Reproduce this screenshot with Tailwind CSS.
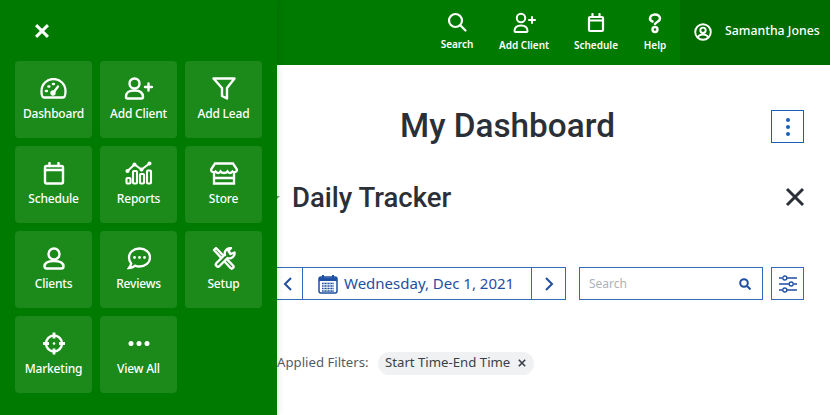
<!DOCTYPE html>
<html lang="en">
<head>
  <meta charset="UTF-8">
  <meta name="viewport" content="width=device-width, initial-scale=1.0">
  <title>My Dashboard</title>
  <script src="https://cdn.jsdelivr.net/npm/@tailwindcss/browser@4"></script>
</head>
<body class="bg-white font-['Noto_Sans',sans-serif] overflow-hidden">
<div class="relative w-[830px] h-[415px] overflow-hidden">

  <!-- Header -->
  <header class="h-[65px] bg-[#007a00] flex justify-end text-white">
    <nav class="flex">
      <a class="w-[58px] flex flex-col items-center pt-[11px]">
        <svg class="w-[22px] h-[22px]" viewBox="0 0 22 22" fill="none" stroke="currentColor" stroke-width="2.200" stroke-linecap="round"><circle cx="9.500" cy="9.500" r="6.500"/><path d="M14.500 14.500l5 5"/></svg>
        <span class="mt-[4px] text-[10px] leading-[14px] font-semibold">Search</span>
      </a>
      <a class="w-[76px] flex flex-col items-center pt-[12px]">
        <svg class="w-[24px] h-[22px]" viewBox="0 0 24 22" fill="none" stroke="currentColor" stroke-width="2" stroke-linecap="round"><circle cx="9" cy="6" r="4.200"/><path d="M2.500 19c0-4 2-5.500 6.500-5.500s6.500 1.500 6.500 5.500c0 .6-.4 1-1 1h-11c-.6 0-1-.4-1-1zM17 8h6M20 5v6"/></svg>
        <span class="mt-[4px] text-[10px] leading-[14px] font-semibold">Add Client</span>
      </a>
      <a class="w-[68px] flex flex-col items-center pt-[13px]">
        <svg class="w-[18px] h-[20px]" viewBox="0 0 18 20" fill="none" stroke="currentColor" stroke-width="2.200" stroke-linecap="round"><rect x="2" y="4" width="14" height="14" rx="1"/><path d="M2 7.500h14M5.500 1v3M12.500 1v3"/></svg>
        <span class="mt-[5px] text-[10px] leading-[14px] font-semibold">Schedule</span>
      </a>
      <a class="w-[50px] flex flex-col items-center pt-[13px]">
        <svg class="w-[16px] h-[21px]" viewBox="0 0 16 21" fill="none" stroke="currentColor" stroke-width="2.400" stroke-linecap="round"><path d="M3 6c0-2.800 2-4.500 5-4.500s5 1.700 5 4.300c0 2.800-4 2.700-5 5.200"/><path d="M3 5.500c0 1.500 1 2.500 2.500 3"/><circle cx="8" cy="16.500" r="2.500"/></svg>
        <span class="mt-[4px] text-[10px] leading-[14px] font-semibold">Help</span>
      </a>
    </nav>
    <div class="w-[150px] bg-[#006c00] flex items-center pl-[14px] gap-[13px] pb-[2px]">
      <svg class="w-[18px] h-[18px] shrink-0" viewBox="0 0 18 18" fill="none" stroke="currentColor" stroke-width="1.900"><circle cx="9" cy="9" r="7.800"/><circle cx="9" cy="7.300" r="2.700"/><path d="M4 14.500c.6-2.200 2.500-3 5-3s4.400.8 5 3"/></svg>
      <span class="text-[12.300px] font-medium whitespace-nowrap">Samantha Jones</span>
    </div>
  </header>

  <!-- Main content -->
  <main class="pl-[277px] text-[#2b2f38]">
    <section class="h-[107px] relative flex justify-center pt-[39px] pr-[92px]">
      <h1 class="font-['Roboto',sans-serif] font-medium text-[33.300px] leading-[44px]">My Dashboard</h1>
      <button class="absolute right-[26px] top-[45px] w-[33px] h-[33px] border border-[#1a5fb4] flex flex-col items-center justify-center gap-[3px]">
        <i class="block w-[4px] h-[4px] rounded-full bg-[#1a5fb4]"></i>
        <i class="block w-[4px] h-[4px] rounded-full bg-[#1a5fb4]"></i>
        <i class="block w-[4px] h-[4px] rounded-full bg-[#1a5fb4]"></i>
      </button>
    </section>

    <section class="relative flex items-center justify-between h-[50px] pl-[15px] pr-[25px]">
      <span class="absolute left-0 top-[24px] w-0 h-0 border-t-[3px] border-t-[#8a8d92] border-r-[3px] border-r-transparent"></span>
      <h2 class="font-['Roboto',sans-serif] font-medium text-[27.500px] leading-[50px] pt-[1px]">Daily Tracker</h2>
      <svg class="w-[20px] h-[20px]" viewBox="0 0 20 20" fill="none" stroke="#2b2f38" stroke-width="3"><path d="M2 2l16 16M18 2L2 18"/></svg>
    </section>

    <section class="flex items-stretch h-[33px] mt-[45px] text-[#1f4fa3]">
      <div class="flex border border-[#2f6bb8] border-l-0">
        <button class="w-[26px] flex items-center justify-center border-r border-[#2f6bb8] pr-[3px]">
          <svg class="w-[10px] h-[14px]" viewBox="0 0 10 14" fill="none" stroke="currentColor" stroke-width="2"><path d="M8 1L2 7l6 6"/></svg>
        </button>
        <div class="w-[229px] flex items-center pl-[15px] gap-[6px] border-r border-[#2f6bb8]">
          <svg class="w-[20px] h-[20px]" viewBox="0 0 20 20"><rect x="1" y="3" width="18" height="16" rx="2" fill="none" stroke="#1f4fa3" stroke-width="1.500"/><path d="M1 3.500h18V7H1z" fill="#1f4fa3"/><path d="M5 1v4M15 1v4" stroke="#1f4fa3" stroke-width="2"/><path d="M4 9.500h12M4 12h12M4 14.500h12M4 17h12" stroke="#1f4fa3" stroke-width="1.300"/><path d="M6 9v8.500M9 9v8.500M12 9v8.500M15 9v8.500" stroke="#fff" stroke-width=".8"/></svg>
          <span class="text-[15px] leading-none whitespace-nowrap">Wednesday, Dec 1, 2021</span>
        </div>
        <button class="w-[33px] flex items-center justify-center">
          <svg class="w-[10px] h-[14px]" viewBox="0 0 10 14" fill="none" stroke="currentColor" stroke-width="2"><path d="M2 1l6 6-6 6"/></svg>
        </button>
      </div>
      <div class="ml-[13px] w-[184px] border border-[#2f6bb8] flex items-center justify-between pl-[9px] pr-[11px]">
        <span class="text-[12px] text-[#aab2bd]">Search</span>
        <svg class="w-[12px] h-[12px]" viewBox="0 0 12 12" fill="none" stroke="#1f4fa3" stroke-width="2"><circle cx="5" cy="5" r="3.800"/><path d="M8 8l3.500 3.500"/></svg>
      </div>
      <button class="ml-[8px] w-[33px] border border-[#2f6bb8] flex items-center justify-center">
        <svg class="w-[20px] h-[20px]" viewBox="0 0 20 20" fill="none" stroke="#1f4fa3" stroke-width="1.300"><path d="M1 4h3.500M9 4h10M1 10h10M15.500 10H19M1 16h3.500M9 16h10"/><circle cx="6.800" cy="4" r="2"/><circle cx="13.200" cy="10" r="2"/><circle cx="6.800" cy="16" r="2"/></svg>
      </button>
    </section>

    <section class="flex items-center mt-[51px] h-[24px]">
      <span class="text-[13.200px] text-[#555b64] w-[101px] whitespace-nowrap">Applied Filters:</span>
      <div class="h-[23px] w-[156px] rounded-full bg-[#f0f1f3] flex items-center pl-[7px] gap-[8px] text-[#3a3f47]">
        <span class="text-[13.200px] whitespace-nowrap">Start Time-End Time</span>
        <svg class="w-[8px] h-[8px]" viewBox="0 0 8 8" fill="none" stroke="currentColor" stroke-width="1.600"><path d="M.8.800l6.400 6.400M7.200.800L.8 7.200"/></svg>
      </div>
    </section>
  </main>

  <!-- Sidebar menu, lies over the page -->
  <aside class="absolute left-0 top-0 w-[277px] h-full bg-[#007a00] text-white shadow-[2px_0_6px_rgba(0,0,0,0.08)] px-[15px]">
    <div class="h-[61px] pl-[20px] pt-[24px]">
      <svg class="w-[14px] h-[14px]" viewBox="0 0 13 13" fill="none" stroke="#fff" stroke-width="2.800"><path d="M1 1l11 11M12 1L1 12"/></svg>
    </div>
    <div class="grid grid-cols-[77px_77px_77px] auto-rows-[77px] gap-[8px] text-[12px] font-medium tracking-[-0.2px]">
      <a class="rounded-[4px] bg-[#1b8a1b] flex flex-col items-center pt-[17px]">
        <svg class="w-[27px] h-[21px]" viewBox="0 0 27 21" fill="none" stroke="#fff" stroke-width="2.300"><path d="M1.500 13a12 12 0 0 1 24 0c0 3-.5 6.500-2.500 6.500H4C2 19.500 1.500 16 1.500 13z"/><path d="M13.500 14.500l4.500-6" stroke-linecap="round"/><circle cx="13" cy="15" r="1.500" fill="#fff"/><path d="M6 13h.8M8.500 8.500h.8M13 6h.8" stroke-linecap="round" stroke-width="2.600"/></svg>
        <span class="mt-[7px] leading-[16px]">Dashboard</span>
      </a>
      <a class="rounded-[4px] bg-[#1b8a1b] flex flex-col items-center pt-[16px]">
        <svg class="w-[29px] h-[23px]" viewBox="0 0 29 23" fill="none" stroke="#fff" stroke-width="2.400" stroke-linecap="round"><circle cx="10.500" cy="6.500" r="5"/><path d="M2 20c0-5 3-6.500 8.500-6.500S19 15 19 20c0 1-.5 1.500-1.500 1.500h-14C2.500 21.500 2 21 2 20zM21 10h7M24.500 6.500v7"/></svg>
        <span class="mt-[6px] leading-[16px]">Add Client</span>
      </a>
      <a class="rounded-[4px] bg-[#1b8a1b] flex flex-col items-center pt-[16px]">
        <svg class="w-[24px] h-[23px]" viewBox="0 0 24 23" fill="none" stroke="#fff" stroke-width="2.400" stroke-linejoin="round"><path d="M1.500 1.500h21L15 11v10.500l-5-2.500v-8z"/></svg>
        <span class="mt-[6px] leading-[16px]">Add Lead</span>
      </a>

      <a class="rounded-[4px] bg-[#1b8a1b] flex flex-col items-center pt-[16px]">
        <svg class="w-[22px] h-[23px]" viewBox="0 0 22 23" fill="none" stroke="#fff" stroke-width="2.400" stroke-linecap="round"><rect x="2" y="4" width="18" height="17.500" rx="1.500"/><path d="M2 8h18M6.500 1v3M15.500 1v3"/></svg>
        <span class="mt-[6px] leading-[16px]">Schedule</span>
      </a>
      <a class="rounded-[4px] bg-[#1b8a1b] flex flex-col items-center pt-[15px]">
        <svg class="w-[28px] h-[24px]" viewBox="0 0 28 24" fill="none" stroke="#fff" stroke-width="2.100"><rect x="1.500" y="17" width="4" height="5.500" rx="1"/><rect x="8" y="10" width="4" height="12.500" rx="1"/><rect x="15" y="13" width="4" height="9.500" rx="1"/><rect x="22" y="9.500" width="4" height="13" rx="1"/><path d="M2.500 10l7-6.500 7 5 8-6" stroke-linecap="round"/><circle cx="2.500" cy="10" r="1" fill="#fff"/><circle cx="9.500" cy="3.500" r="1" fill="#fff"/><circle cx="16.500" cy="8.500" r="1" fill="#fff"/><circle cx="24.500" cy="2.500" r="1" fill="#fff"/></svg>
        <span class="mt-[6px] leading-[16px]">Reports</span>
      </a>
      <a class="rounded-[4px] bg-[#1b8a1b] flex flex-col items-center pt-[16px]">
        <svg class="w-[28px] h-[23px]" viewBox="0 0 28 23" fill="none" stroke="#fff" stroke-width="2.300"><path d="M5 1.500h18l4 6c0 2.500-3 3.500-4.500 2-1.500 2-4 2-5 0-1.500 2-5.500 2-7 0-1 2-3.500 2-5 0C4 11 1 10 1 7.500zM4 11v10.500h20V11M4 16h20"/></svg>
        <span class="mt-[6px] leading-[16px]">Store</span>
      </a>

      <a class="rounded-[4px] bg-[#1b8a1b] flex flex-col items-center pt-[16px]">
        <svg class="w-[22px] h-[23px]" viewBox="0 0 22 23" fill="none" stroke="#fff" stroke-width="2.400"><circle cx="11" cy="7" r="5.500"/><path d="M1.500 19.500c0-4 3-5.500 9.500-5.500s9.500 1.500 9.500 5.500c0 1.300-.7 2-2 2h-15c-1.300 0-2-.7-2-2z"/></svg>
        <span class="mt-[6px] leading-[16px]">Clients</span>
      </a>
      <a class="rounded-[4px] bg-[#1b8a1b] flex flex-col items-center pt-[16px]">
        <svg class="w-[24px] h-[23px]" viewBox="0 0 24 23" fill="none" stroke="#fff" stroke-width="2.300"><path d="M12.500 1.500c6 0 10.500 3.800 10.500 9s-4.500 9-10.500 9c-1.500 0-3-.2-4.300-.8-1.300 1.200-3.700 2.300-6.200 2.300 1.200-1.300 2-3 2.200-4.500C2.500 14.800 2 12.800 2 10.500c0-5.200 4.500-9 10.500-9z"/><circle cx="7.500" cy="10.500" r="1.400" fill="#fff" stroke="none"/><circle cx="12.500" cy="10.500" r="1.400" fill="#fff" stroke="none"/><circle cx="17.500" cy="10.500" r="1.400" fill="#fff" stroke="none"/></svg>
        <span class="mt-[6px] leading-[16px]">Reviews</span>
      </a>
      <a class="rounded-[4px] bg-[#1b8a1b] flex flex-col items-center pt-[16px]">
        <svg class="w-[24px] h-[23px]" viewBox="0 0 24 23" fill="none" stroke="#fff" stroke-width="2.400"><path d="M2 3l2-2 17 17.500c.8.800.8 1.700 0 2.500s-1.700.8-2.500 0z" stroke-linejoin="round"/><path d="M13 8c-1-3 1-7 6-7l-2.500 3 2 3 4-1.500c.5 3.500-3 7-7 5.500l-8 8c-1 1-2 1-3 0s-1-2 0-3l8-8z" fill="#1b8a1b" stroke-linejoin="round"/></svg>
        <span class="mt-[6px] leading-[16px]">Setup</span>
      </a>

      <a class="rounded-[4px] bg-[#1b8a1b] flex flex-col items-center pt-[16px]">
        <svg class="w-[24px] h-[23px]" viewBox="0 0 24 23" fill="none" stroke="#fff" stroke-width="2.400"><circle cx="12" cy="11.500" r="8"/><path d="M12 .5v6M12 16.500v6M1 11.500h6M17 11.500h6" stroke-width="2.800"/><circle cx="12" cy="11.500" r="1.300" fill="#fff" stroke="none"/></svg>
        <span class="mt-[6px] leading-[16px]">Marketing</span>
      </a>
      <a class="rounded-[4px] bg-[#1b8a1b] flex flex-col items-center pt-[16px]">
        <svg class="w-[24px] h-[23px]" viewBox="0 0 24 23" fill="#fff"><circle cx="4" cy="11.500" r="2.500"/><circle cx="12" cy="11.500" r="2.500"/><circle cx="20" cy="11.500" r="2.500"/></svg>
        <span class="mt-[6px] leading-[16px]">View All</span>
      </a>
    </div>
  </aside>
</div>
</body>
</html>
